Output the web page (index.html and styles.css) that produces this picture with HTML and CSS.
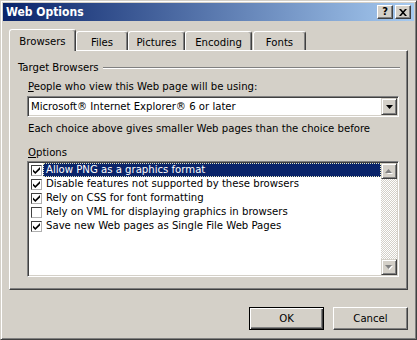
FILE: index.html
```html
<!DOCTYPE html>
<html>
<head>
<meta charset="utf-8">
<link rel="stylesheet" href="styles.css">
</head>
<body>
<div class="window">
  <div class="titlebar">
    <span class="title">Web Options</span>
    <div class="tb-buttons">
      <span class="tbtn">?</span>
      <span class="tbtn"><svg width="8" height="7" viewBox="0 0 8 7"><path d="M0 0h2l2 2.2L6 0h2L5 3.5 8 7H6L4 4.8 2 7H0l3-3.5z" fill="#000"/></svg></span>
    </div>
  </div>
  <div class="content">
    <div class="tabs">
      <div class="tab active t-browsers">Browsers</div>
      <div class="tab t-files">Files</div>
      <div class="tab t-pictures">Pictures</div>
      <div class="tab t-encoding">Encoding</div>
      <div class="tab t-fonts">Fonts</div>
    </div>
    <div class="panel">
      <div class="group-head"><span>Target Browsers</span><div class="rule"></div></div>
      <div class="group-body">
        <div class="label"><u>P</u>eople who view this Web page will be using:</div>
        <div class="combo">
          <span class="combo-text">Microsoft® Internet Explorer® 6 or later</span>
          <span class="drop-btn"><svg width="7" height="4" viewBox="0 0 7 4"><path d="M0 0h7L3.5 4z" fill="#000"/></svg></span>
        </div>
        <div class="note">Each choice above gives smaller Web pages than the choice before</div>
        <div class="label options-label"><u>O</u>ptions</div>
        <div class="listbox">
          <div class="items">
            <div class="row selected"><span class="check on"><svg width="7" height="7" viewBox="0 0 7 7"><path d="M0 2.5L2.3 4.8 7 0v2.5L2.3 7 0 4.8z" fill="#000"/></svg></span><span class="row-text">Allow PNG as a graphics format</span></div>
            <div class="row"><span class="check on"><svg width="7" height="7" viewBox="0 0 7 7"><path d="M0 2.5L2.3 4.8 7 0v2.5L2.3 7 0 4.8z" fill="#000"/></svg></span><span class="row-text">Disable features not supported by these browsers</span></div>
            <div class="row"><span class="check on"><svg width="7" height="7" viewBox="0 0 7 7"><path d="M0 2.5L2.3 4.8 7 0v2.5L2.3 7 0 4.8z" fill="#000"/></svg></span><span class="row-text">Rely on CSS for font formatting</span></div>
            <div class="row"><span class="check"></span><span class="row-text">Rely on VML for displaying graphics in browsers</span></div>
            <div class="row"><span class="check on"><svg width="7" height="7" viewBox="0 0 7 7"><path d="M0 2.5L2.3 4.8 7 0v2.5L2.3 7 0 4.8z" fill="#000"/></svg></span><span class="row-text">Save new Web pages as Single File Web Pages</span></div>
          </div>
          <div class="scrollbar">
            <span class="sb-btn"><svg width="8" height="5" viewBox="0 0 8 5"><path d="M4 1L7 4H1z" fill="#fff" transform="translate(1 1)"/><path d="M3.5 0L7 4H0z" fill="#808080"/></svg></span>
            <span class="sb-track"></span>
            <span class="sb-btn"><svg width="8" height="5" viewBox="0 0 8 5"><path d="M1 1h7L4.5 5z" fill="#fff"/><path d="M0 0h7L3.5 4z" fill="#808080"/></svg></span>
          </div>
        </div>
      </div>
    </div>
    <div class="buttons">
      <button class="btn default">OK</button>
      <button class="btn">Cancel</button>
    </div>
  </div>
</div>
</body>
</html>
```
FILE: styles.css
```css
* { box-sizing: border-box; }
html, body { margin: 0; padding: 0; }
body {
  width: 417px;
  height: 340px;
  background: #d4d0c8;
  font-family: Tahoma, "DejaVu Sans Condensed", "Liberation Sans", sans-serif;
  font-size: 11.25px;
  color: #000;
}
.window {
  width: 417px;
  height: 340px;
  background: #d4d0c8;
  border: 1px solid;
  border-color: #d4d0c8 #404040 #404040 #d4d0c8;
  box-shadow: inset 1px 1px #fff, inset -1px -1px #808080;
  padding: 2px;
  display: flex;
  flex-direction: column;
}
.titlebar {
  height: 18px;
  flex: none;
  display: flex;
  align-items: center;
  background: linear-gradient(to right, #0a246a, #a6caf0);
  color: #fff;
  font-weight: bold;
  padding: 0 3px 0 3px;
}
.title { flex: 1; line-height: 18px; font-size: 12px; }
.tb-buttons { display: flex; gap: 2px; }
.tbtn {
  width: 16px;
  height: 14px;
  background: #d4d0c8;
  border: 1px solid;
  border-color: #fff #404040 #404040 #fff;
  box-shadow: inset -1px -1px #808080;
  display: flex;
  align-items: center;
  justify-content: center;
  color: #000;
  font-weight: bold;
  font-size: 11px;
  line-height: 12px;
}
.content {
  flex: 1;
  padding: 8px 6px 0 6px;
  display: flex;
  flex-direction: column;
}
.tabs {
  display: flex;
  align-items: flex-end;
  height: 21px;
  flex: none;
}
.tab {
  height: 19px;
  padding-top: 2px;
  border: 1px solid;
  border-bottom: none;
  border-color: #fff #404040 transparent #fff;
  box-shadow: inset -1px 0 #808080;
  border-radius: 3px 3px 0 0;
  display: flex;
  align-items: center;
  justify-content: center;
  background: #d4d0c8;
}
.tab.active {
  height: 22px;
  margin-bottom: -1px;
  position: relative;
  z-index: 1;
}
.t-browsers { width: 67px; }
.t-files { width: 52px; }
.t-pictures { width: 57px; }
.t-encoding { width: 67px; }
.t-fonts { width: 53px; margin-left: 1px; }
.panel {
  width: 399px;
  height: 240px;
  flex: none;
  border: 1px solid;
  border-color: #fff #404040 #404040 #fff;
  box-shadow: inset -1px -1px #808080;
  padding: 10px 7px 0 8px;
}
.group-head {
  display: flex;
  align-items: center;
  height: 13px;
  line-height: 13px;
}
.rule {
  flex: 1;
  height: 2px;
  border-top: 1px solid #808080;
  border-bottom: 1px solid #fff;
  margin-left: 4px;
}
.group-body { padding: 0 1px 0 9px; }
.label {
  line-height: 13px;
  height: 13px;
  padding-left: 1px;
  margin-top: 6px;
}
.options-label { margin-top: 11px; }
.combo {
  margin-top: 3px;
  height: 21px;
  display: flex;
  align-items: center;
  background: #fff;
  border: 1px solid;
  border-color: #808080 #fff #fff #808080;
  box-shadow: inset 1px 1px #404040, inset -1px -1px #d4d0c8;
  padding: 1px;
}
.combo-text { flex: 1; padding-left: 2px; }
.drop-btn {
  width: 16px;
  height: 17px;
  background: #d4d0c8;
  border: 1px solid;
  border-color: #d4d0c8 #404040 #404040 #d4d0c8;
  box-shadow: inset 1px 1px #fff, inset -1px -1px #808080;
  display: flex;
  align-items: center;
  justify-content: center;
}
.note {
  margin-top: 5px;
  line-height: 13px;
  height: 13px;
  padding-left: 1px;
}
.listbox {
  margin-top: 2px;
  height: 116px;
  display: flex;
  background: #fff;
  border: 1px solid;
  border-color: #808080 #fff #fff #808080;
  box-shadow: inset 1px 1px #404040, inset -1px -1px #d4d0c8;
  padding: 1px;
}
.items { flex: 1; }
.row {
  height: 14px;
  display: flex;
  align-items: center;
  padding-left: 2px;
}
.check {
  width: 11px;
  height: 11px;
  flex: none;
  background: #fff;
  border: 1px solid;
  border-color: #404040 #b0b0b0 #b0b0b0 #404040;
  margin-right: 1px;
  display: flex;
  align-items: center;
  justify-content: center;
}
.row-text {
  flex: 1;
  height: 14px;
  line-height: 12px;
  padding: 0 2px;
  border: 1px solid transparent;
  white-space: nowrap;
}
.row.selected .row-text {
  background: #0a246a;
  color: #fff;
  border: 1px dotted #e8e8c0;
}
.scrollbar {
  width: 16px;
  flex: none;
  display: flex;
  flex-direction: column;
  background-color: #fff;
  background-image: repeating-conic-gradient(#d4d0c8 0 25%, #fff 0 50%);
  background-size: 2px 2px;
}
.sb-btn {
  height: 16px;
  flex: none;
  background: #d4d0c8;
  border: 1px solid;
  border-color: #d4d0c8 #404040 #404040 #d4d0c8;
  box-shadow: inset 1px 1px #fff, inset -1px -1px #808080;
  display: flex;
  align-items: center;
  justify-content: center;
}
.sb-track { flex: 1; }
.buttons {
  display: flex;
  justify-content: flex-end;
  gap: 9px;
  margin-top: 17px;
}
.btn {
  width: 75px;
  height: 23px;
  padding: 0;
  font: inherit;
  color: #000;
  background: #d4d0c8;
  border: 1px solid;
  border-color: #fff #404040 #404040 #fff;
  box-shadow: inset -1px -1px #808080;
}
.btn.default {
  border: 1px solid #000;
  box-shadow: inset 1px 1px #fff, inset -1px -1px #404040, inset -2px -2px #808080;
}
```
